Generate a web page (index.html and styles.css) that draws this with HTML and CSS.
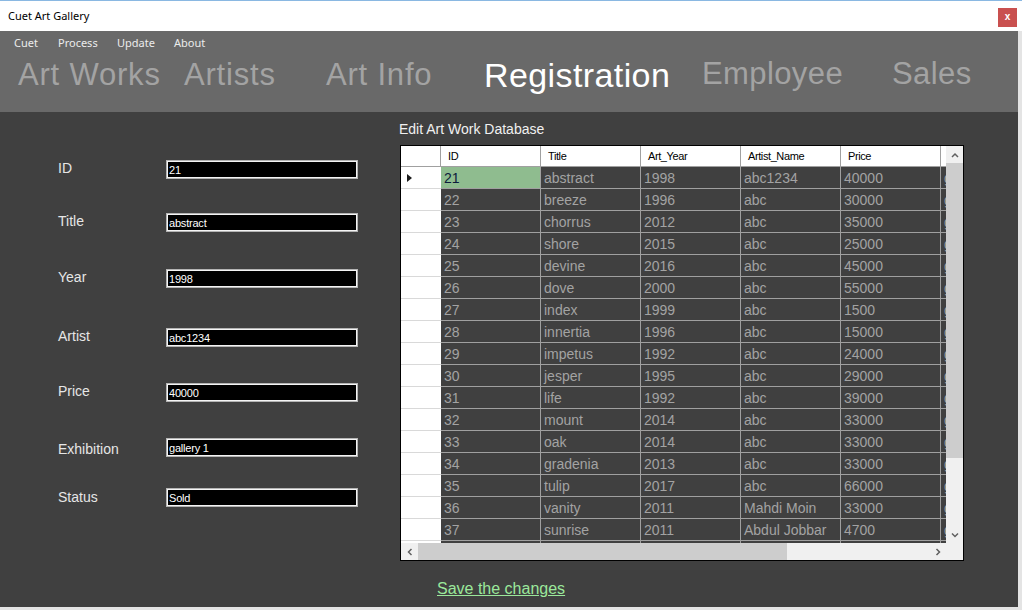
FILE: index.html
```html
<!DOCTYPE html>
<html lang="en">
<head>
<meta charset="utf-8">
<title>Cuet Art Gallery</title>
<link rel="stylesheet" href="styles.css">
</head>
<body>
<div class="window">
  <div class="titlebar">
    <span class="title">Cuet Art Gallery</span>
    <span class="close">x</span>
  </div>
  <div class="header">
    <nav class="menu">
      <span>Cuet</span><span>Process</span><span>Update</span><span>About</span>
    </nav>
    <div class="tabs">
      <span class="tab">Art Works</span>
      <span class="tab">Artists</span>
      <span class="tab">Art Info</span>
      <span class="tab active">Registration</span>
      <span class="tab low">Employee</span>
      <span class="tab low">Sales</span>
    </div>
  </div>
  <div class="main">
    <form class="form">
      <div class="field"><label>ID</label><input class="input" value="21" readonly></div>
      <div class="field"><label>Title</label><input class="input" value="abstract" readonly></div>
      <div class="field"><label>Year</label><input class="input" value="1998" readonly></div>
      <div class="field"><label>Artist</label><input class="input" value="abc1234" readonly></div>
      <div class="field"><label>Price</label><input class="input" value="40000" readonly></div>
      <div class="field"><label>Exhibition</label><input class="input" value="gallery 1" readonly></div>
      <div class="field"><label>Status</label><input class="input" value="Sold" readonly></div>
    </form>
    <section class="panel">
      <div class="caption">Edit Art Work Database</div>
      <div class="grid">
        <div class="viewport">
          <div class="row head"><span class="rh"></span><span class="c">ID</span><span class="c">Title</span><span class="c">Art_Year</span><span class="c">Artist_Name</span><span class="c">Price</span><span class="c">Exhibition</span></div>
          <div class="row"><span class="rh cur"></span><span class="c sel">21</span><span class="c">abstract</span><span class="c">1998</span><span class="c">abc1234</span><span class="c">40000</span><span class="c">gallery 1</span></div>
          <div class="row"><span class="rh"></span><span class="c">22</span><span class="c">breeze</span><span class="c">1996</span><span class="c">abc</span><span class="c">30000</span><span class="c">gallery 1</span></div>
          <div class="row"><span class="rh"></span><span class="c">23</span><span class="c">chorrus</span><span class="c">2012</span><span class="c">abc</span><span class="c">35000</span><span class="c">gallery 1</span></div>
          <div class="row"><span class="rh"></span><span class="c">24</span><span class="c">shore</span><span class="c">2015</span><span class="c">abc</span><span class="c">25000</span><span class="c">gallery 1</span></div>
          <div class="row"><span class="rh"></span><span class="c">25</span><span class="c">devine</span><span class="c">2016</span><span class="c">abc</span><span class="c">45000</span><span class="c">gallery 1</span></div>
          <div class="row"><span class="rh"></span><span class="c">26</span><span class="c">dove</span><span class="c">2000</span><span class="c">abc</span><span class="c">55000</span><span class="c">gallery 1</span></div>
          <div class="row"><span class="rh"></span><span class="c">27</span><span class="c">index</span><span class="c">1999</span><span class="c">abc</span><span class="c">1500</span><span class="c">gallery 1</span></div>
          <div class="row"><span class="rh"></span><span class="c">28</span><span class="c">innertia</span><span class="c">1996</span><span class="c">abc</span><span class="c">15000</span><span class="c">gallery 1</span></div>
          <div class="row"><span class="rh"></span><span class="c">29</span><span class="c">impetus</span><span class="c">1992</span><span class="c">abc</span><span class="c">24000</span><span class="c">gallery 1</span></div>
          <div class="row"><span class="rh"></span><span class="c">30</span><span class="c">jesper</span><span class="c">1995</span><span class="c">abc</span><span class="c">29000</span><span class="c">gallery 1</span></div>
          <div class="row"><span class="rh"></span><span class="c">31</span><span class="c">life</span><span class="c">1992</span><span class="c">abc</span><span class="c">39000</span><span class="c">gallery 1</span></div>
          <div class="row"><span class="rh"></span><span class="c">32</span><span class="c">mount</span><span class="c">2014</span><span class="c">abc</span><span class="c">33000</span><span class="c">gallery 1</span></div>
          <div class="row"><span class="rh"></span><span class="c">33</span><span class="c">oak</span><span class="c">2014</span><span class="c">abc</span><span class="c">33000</span><span class="c">gallery 1</span></div>
          <div class="row"><span class="rh"></span><span class="c">34</span><span class="c">gradenia</span><span class="c">2013</span><span class="c">abc</span><span class="c">33000</span><span class="c">gallery 1</span></div>
          <div class="row"><span class="rh"></span><span class="c">35</span><span class="c">tulip</span><span class="c">2017</span><span class="c">abc</span><span class="c">66000</span><span class="c">gallery 1</span></div>
          <div class="row"><span class="rh"></span><span class="c">36</span><span class="c">vanity</span><span class="c">2011</span><span class="c">Mahdi Moin</span><span class="c">33000</span><span class="c">gallery 1</span></div>
          <div class="row"><span class="rh"></span><span class="c">37</span><span class="c">sunrise</span><span class="c">2011</span><span class="c">Abdul Jobbar</span><span class="c">4700</span><span class="c">gallery 1</span></div>
          <div class="row"><span class="rh"></span><span class="c"></span><span class="c"></span><span class="c"></span><span class="c"></span><span class="c"></span><span class="c"></span></div>
        </div>
        <div class="vscroll">
          <span class="btn"><svg width="8" height="6" viewBox="0 0 8 6"><polyline points="1,5 4,2 7,5" fill="none" stroke="#606060" stroke-width="1.5"/></svg></span>
          <span class="vthumb"></span>
          <span class="fill"></span>
          <span class="btn"><svg width="8" height="6" viewBox="0 0 8 6"><polyline points="1,1.5 4,4.5 7,1.5" fill="none" stroke="#606060" stroke-width="1.5"/></svg></span>
        </div>
        <div class="hscroll">
          <span class="btn"><svg width="6" height="8" viewBox="0 0 6 8"><polyline points="4.5,1 1.5,4 4.5,7" fill="none" stroke="#606060" stroke-width="1.5"/></svg></span>
          <span class="hthumb"></span>
          <span class="fill"></span>
          <span class="btn"><svg width="6" height="8" viewBox="0 0 6 8"><polyline points="1.5,1 4.5,4 1.5,7" fill="none" stroke="#606060" stroke-width="1.5"/></svg></span>
        </div>
        <div class="corner"></div>
      </div>
      <a class="save" href="#">Save the changes</a>
    </section>
  </div>
</div>
</body>
</html>
```

FILE: styles.css
```css
html, body {
  margin: 0;
  padding: 0;
}

body {
  background: #e4e4e4;
  font-family: "Liberation Sans", Arial, sans-serif;
}

.window {
  width: 1022px;
  height: 610px;
  display: flex;
  flex-direction: column;
  overflow: hidden;
}

/* ---------- title bar ---------- */
.titlebar {
  flex: none;
  height: 30px;
  border-top: 1px solid #8ab8e2;
  background: #ffffff;
  display: flex;
  align-items: center;
  justify-content: space-between;
  padding-left: 8px;
}

.title {
  font: 11px/16px "Noto Sans", sans-serif;
  color: #000;
}

.close {
  align-self: flex-start;
  margin-top: 7px;
  margin-right: 5px;
  width: 19px;
  height: 19px;
  background: #c9504f;
  color: #fff;
  font: bold 10px/18px "Liberation Sans", Arial, sans-serif;
  text-align: center;
}

/* ---------- header ---------- */
.header {
  flex: none;
  width: 1018px;
  height: 81px;
  background: #696969;
}

.menu {
  display: flex;
  height: 16px;
  padding: 4px 0 0 14px;
  font: 11px/16px "Noto Sans", sans-serif;
  color: #ececec;
}

.menu span:nth-child(1) { width: 44px; }
.menu span:nth-child(2) { width: 59px; }
.menu span:nth-child(3) { width: 57px; }

.tabs {
  display: flex;
  align-items: flex-start;
  padding-left: 18px;
}

.tab {
  flex: none;
  margin-top: 8px;
  font-size: 31px;
  line-height: 31px;
  letter-spacing: 0.8px;
  color: #a3a3a3;
  white-space: nowrap;
}

.tab:nth-child(1) { width: 166px; }
.tab:nth-child(2) { width: 142px; }
.tab:nth-child(3) { width: 158px; }
.tab:nth-child(4) { width: 218px; }
.tab:nth-child(5) { width: 190px; }

.tab.active {
  color: #ffffff;
  font-size: 34px;
  line-height: 34px;
  letter-spacing: 0.4px;
  margin-top: 7px;
}

.tab.low {
  margin-top: 7px;
  letter-spacing: 0.4px;
}

/* ---------- main ---------- */
.main {
  flex: none;
  width: 1018px;
  height: 495px;
  background: #404040;
  display: flex;
}

.form {
  flex: none;
  width: 399px;
  margin: 0;
  padding-top: 48px;
  box-sizing: border-box;
  display: flex;
  flex-direction: column;
}

.field {
  display: flex;
  align-items: center;
  height: 19px;
}

.field:nth-child(2) { margin-top: 34px; }
.field:nth-child(3) { margin-top: 37px; }
.field:nth-child(4) { margin-top: 40px; }
.field:nth-child(5) { margin-top: 36px; }
.field:nth-child(6) { margin-top: 36px; }
.field:nth-child(7) { margin-top: 31px; }

.field label {
  width: 108px;
  padding-left: 58px;
  margin-top: -3px;
  font-size: 14px;
  line-height: 18px;
  color: #e6e6e6;
}

.field:nth-child(6) label {
  margin-top: 2px;
}

.field:nth-child(7) label {
  margin-top: -1px;
}

.input {
  -webkit-appearance: none;
  appearance: none;
  margin: 0;
  width: 192px;
  height: 19px;
  box-sizing: border-box;
  background: #000;
  border: 1px solid #b4b4b4;
  box-shadow: inset 0 0 0 1px #f4f4f4;
  outline: none;
  padding: 0 0 0 2px;
  color: #fff;
  font: 11px/15px "Liberation Sans", Arial, sans-serif;
  letter-spacing: -0.2px;
}

/* ---------- grid panel ---------- */
.panel {
  flex: 1;
  display: flex;
  flex-direction: column;
  align-items: flex-start;
  padding-top: 9px;
}

.caption {
  font-size: 14px;
  line-height: 16px;
  color: #f0f0f0;
}

.grid {
  margin: 8px 0 0 1px;
  width: 564px;
  height: 416px;
  box-sizing: border-box;
  border: 1px solid #000;
  background: #fff;
  display: grid;
  grid-template-columns: 545px 17px;
  grid-template-rows: 397px 17px;
}

.viewport {
  overflow: hidden;
  background: #fff;
}

.row {
  display: flex;
  height: 22px;
}

.row > span {
  flex: none;
  box-sizing: border-box;
  height: 100%;
}

.rh {
  width: 40px;
  background: #fff;
  border-bottom: 1px solid #d9d9d9;
  display: flex;
  align-items: center;
}

.rh.cur::after {
  content: "";
  margin-left: 6px;
  border-left: 5px solid #1a1a1a;
  border-top: 4px solid transparent;
  border-bottom: 4px solid transparent;
}

.c {
  width: 100px;
  background: #404040;
  border-right: 1px solid #a0a0a0;
  border-bottom: 1px solid #a0a0a0;
  padding-left: 3px;
  color: #a3a3a3;
  font-size: 14px;
  line-height: 23px;
  white-space: nowrap;
  overflow: hidden;
}

.c.sel {
  background: #8fbc8f;
  color: #0c1b3c;
}

.head {
  height: 21px;
}

.head .rh {
  border-right: 1px solid #a0a0a0;
  border-bottom: 1px solid #a0a0a0;
}

.head .c {
  background: #fff;
  color: #000;
  font-size: 11px;
  line-height: 20px;
  letter-spacing: -0.4px;
  padding-left: 7px;
}

.vscroll {
  background: #f0f0f0;
  display: flex;
  flex-direction: column;
}

.hscroll {
  background: #f0f0f0;
  display: flex;
}

.btn {
  flex: none;
  width: 17px;
  height: 17px;
  display: flex;
  align-items: center;
  justify-content: center;
}

.vthumb {
  flex: none;
  height: 295px;
  background: #cdcdcd;
}

.hthumb {
  flex: none;
  width: 369px;
  background: #cdcdcd;
}

.fill {
  flex: 1;
}

.corner {
  background: #f0f0f0;
}

.save {
  margin: 18px 0 0 38px;
  font-size: 16px;
  line-height: 20px;
  color: #9be89b;
  text-decoration: underline;
}
```
